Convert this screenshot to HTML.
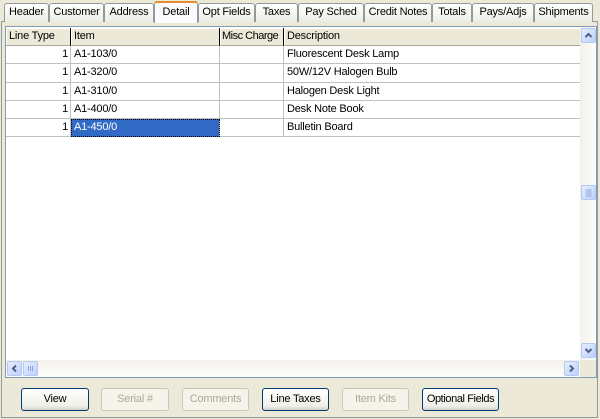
<!DOCTYPE html>
<html><head><style>
*{box-sizing:border-box;margin:0;padding:0}
body{width:600px;height:419px;background:#ece9d8;font-family:"Liberation Sans",sans-serif;font-size:11px;position:relative;overflow:hidden;color:#000;letter-spacing:-0.2px}
.tab{position:absolute;top:3px;height:19px;border:1px solid #919b9c;border-bottom:none;border-radius:3px 3px 0 0;background:linear-gradient(#fff,#ececE5);text-align:center;line-height:17px;white-space:nowrap;overflow:hidden}
.tab.sel{top:1px;height:22px;background:#fcfcfe;border-top:2px solid #e68b2c;line-height:18px;z-index:2}
.panel{position:absolute;left:1px;top:21px;width:597px;height:397px;border:1px solid #919b9c;background:#ece9d8}
.grid{position:absolute;left:5px;top:26px;width:592px;height:352px;border:1px solid #7f9db9;background:#fff;overflow:hidden}
.abs{position:absolute}
.hdr{position:absolute;top:1px;height:18px;background:#ece9d8;border-right:1px solid #000;border-bottom:1px solid #aca899;line-height:17px;padding-left:3px;box-shadow:inset 1px 1px #fff;white-space:nowrap;overflow:hidden}
.row{position:absolute;left:0;width:574px;height:18.3px;border-bottom:1px solid #c0c0c0}
.c{position:absolute;top:0;height:18px;line-height:17px;border-right:1px solid #c0c0c0;padding-left:3px;white-space:nowrap;overflow:hidden}
.btn{position:absolute;top:388px;height:23px;border:1px solid #003c74;border-radius:3px;background:linear-gradient(#fff,#f0f0ea 80%,#d6d0c5);text-align:center;line-height:21px;white-space:nowrap}
.btn.dis{border-color:#c9c7ba;color:#aca899;background:#f5f4ea}
.sb{background:linear-gradient(90deg,#f3f1ec,#fefefb)}
.arr{position:absolute;width:15px;height:15px;border:1px solid #b3c8f5;border-radius:2px;background:linear-gradient(135deg,#e5edfe,#bfd1fb)}
.arr svg{position:absolute;left:0;top:0}
</style></head><body>
<div class="panel"></div>
<div class="tab" style="left:4px;width:45px">Header</div>
<div class="tab" style="left:49px;width:55px">Customer</div>
<div class="tab" style="left:104px;width:50px">Address</div>
<div class="tab sel" style="left:154px;width:44px">Detail</div>
<div class="tab" style="left:198px;width:57px">Opt Fields</div>
<div class="tab" style="left:255px;width:43px">Taxes</div>
<div class="tab" style="left:298px;width:66px">Pay Sched</div>
<div class="tab" style="left:364px;width:68px">Credit Notes</div>
<div class="tab" style="left:432px;width:40px">Totals</div>
<div class="tab" style="left:472px;width:62px">Pays/Adjs</div>
<div class="tab" style="left:534px;width:59px">Shipments</div>

<div class="grid">
<div class="hdr" style="left:0;width:65px">Line Type</div>
<div class="hdr" style="left:65px;width:149px">Item</div>
<div class="hdr" style="left:214px;width:64px;padding-left:2px;letter-spacing:-0.5px">Misc Charge</div>
<div class="hdr" style="left:278px;width:296px;border-right:none">Description</div>

<div class="row" style="top:19px"><div class="c" style="left:0;width:65px;text-align:right;padding-right:2px">1</div><div class="c" style="left:65px;width:149px">A1-103/0</div><div class="c" style="left:214px;width:64px"></div><div class="c" style="left:278px;width:296px;border:none">Fluorescent Desk Lamp</div></div>
<div class="row" style="top:37.3px"><div class="c" style="left:0;width:65px;text-align:right;padding-right:2px">1</div><div class="c" style="left:65px;width:149px">A1-320/0</div><div class="c" style="left:214px;width:64px"></div><div class="c" style="left:278px;width:296px;border:none">50W/12V Halogen Bulb</div></div>
<div class="row" style="top:55.6px"><div class="c" style="left:0;width:65px;text-align:right;padding-right:2px">1</div><div class="c" style="left:65px;width:149px">A1-310/0</div><div class="c" style="left:214px;width:64px"></div><div class="c" style="left:278px;width:296px;border:none">Halogen Desk Light</div></div>
<div class="row" style="top:73.9px"><div class="c" style="left:0;width:65px;text-align:right;padding-right:2px">1</div><div class="c" style="left:65px;width:149px">A1-400/0</div><div class="c" style="left:214px;width:64px"></div><div class="c" style="left:278px;width:296px;border:none">Desk Note Book</div></div>
<div class="row" style="top:92.2px"><div class="c" style="left:0;width:65px;text-align:right;padding-right:2px">1</div><div class="c" style="left:65px;width:149px;background:#316ac5;color:#fff;outline:1px dotted #000;outline-offset:-1px">A1-450/0</div><div class="c" style="left:214px;width:64px"></div><div class="c" style="left:278px;width:296px;border:none">Bulletin Board</div></div>

<div class="abs sb" style="left:574px;top:0;width:17px;height:333px"></div>
<div class="arr" style="left:575px;top:1px"><svg width="13" height="13"><path d="M3.5 8L6.5 5L9.5 8" stroke="#4d6185" stroke-width="2" fill="none"/></svg></div>
<div class="arr" style="left:575px;top:316px"><svg width="13" height="13"><path d="M3.5 5L6.5 8L9.5 5" stroke="#4d6185" stroke-width="2" fill="none"/></svg></div>
<div class="arr" style="left:575px;top:158px"><svg width="13" height="13"><path d="M3.5 4H9.5M3.5 6H9.5M3.5 8H9.5M3.5 10H9.5" stroke="#8fa7e0" stroke-width="1" fill="none"/></svg></div>
<div class="abs" style="left:0;top:333px;width:574px;height:17px;background:linear-gradient(#f3f1ec,#fefefb)"></div>
<div class="arr" style="left:1px;top:334px"><svg width="13" height="13"><path d="M8 3.5L5 6.5L8 9.5" stroke="#4d6185" stroke-width="2" fill="none"/></svg></div>
<div class="arr" style="left:17px;top:334px"><svg width="13" height="13"><path d="M4.5 4V9M6.5 4V9M8.5 4V9" stroke="#8fa7e0" stroke-width="1" fill="none"/></svg></div>
<div class="arr" style="left:558px;top:334px"><svg width="13" height="13"><path d="M5 3.5L8 6.5L5 9.5" stroke="#4d6185" stroke-width="2" fill="none"/></svg></div>
<div class="abs" style="left:574px;top:333px;width:17px;height:17px;background:#ece9d8"></div>
</div>

<div class="btn" style="left:21px;width:68px">View</div>
<div class="btn dis" style="left:101px;width:68px">Serial #</div>
<div class="btn dis" style="left:182px;width:67px">Comments</div>
<div class="btn" style="left:262px;width:67px">Line Taxes</div>
<div class="btn dis" style="left:342px;width:67px">Item Kits</div>
<div class="btn" style="left:422px;width:77px;letter-spacing:-0.4px">Optional Fields</div>
</body></html>
